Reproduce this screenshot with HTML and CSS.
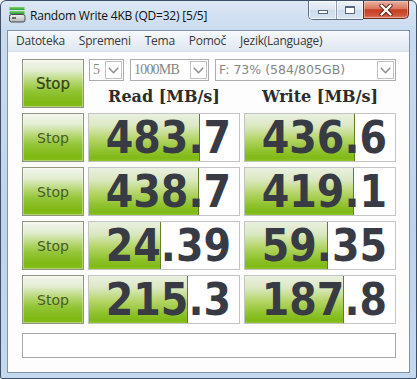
FILE: index.html
```html
<!DOCTYPE html>
<html>
<head>
<meta charset="utf-8">
<title>Random Write 4KB</title>
<link rel="stylesheet" href="styles.css">
</head>
<body>
<div class="window">
  <div class="titlebar">
    <svg class="app-icon" width="17" height="17" viewBox="0 0 17 17">
      <defs>
        <linearGradient id="g1" x1="0" y1="0" x2="0" y2="1"><stop offset="0" stop-color="#7fd36a"/><stop offset="1" stop-color="#2a9a3a"/></linearGradient>
        <linearGradient id="g2" x1="0" y1="0" x2="0" y2="1"><stop offset="0" stop-color="#f2f2f2"/><stop offset="1" stop-color="#b4b4b4"/></linearGradient>
      </defs>
      <rect x="0.5" y="1" width="15" height="3" fill="url(#g1)"/>
      <rect x="0.5" y="5" width="15" height="3" fill="url(#g1)"/>
      <rect x="0.5" y="8.5" width="15.5" height="7.5" rx="2" fill="url(#g2)" stroke="#4a4a4a"/>
      <rect x="3" y="11" width="4" height="2" fill="#6a6a6a"/>
    </svg>
    <span class="title">Random Write 4KB (QD=32) [5/5]</span>
    <div class="caption">
      <div class="cap-group">
        <div class="cap-btn"><span class="min-glyph"></span></div>
        <div class="cap-btn cap-max"><span class="max-glyph"></span></div>
      </div>
      <div class="cap-close">
        <svg width="14" height="12" viewBox="0 0 14 12">
          <path d="M2.5 1.5 L11.5 10.5 M11.5 1.5 L2.5 10.5" stroke="#5a2418" stroke-width="4.2" stroke-linecap="round"/>
          <path d="M2.5 1.5 L11.5 10.5 M11.5 1.5 L2.5 10.5" stroke="#ffffff" stroke-width="2.4" stroke-linecap="round"/>
        </svg>
      </div>
    </div>
  </div>
  <div class="frame-body">
    <div class="client">
      <div class="menubar">
        <span class="menu-item">Datoteka</span>
        <span class="menu-item">Spremeni</span>
        <span class="menu-item">Tema</span>
        <span class="menu-item">Pomoč</span>
        <span class="menu-item">Jezik(Language)</span>
      </div>
      <div class="content">
        <div class="grid">
          <div class="stop stop-main">Stop</div>
          <div class="combos">
            <div class="combo combo-count"><span class="combo-val serif">5</span><span class="combo-arrow"><svg width="11" height="7" viewBox="0 0 11 7"><path d="M0.8 0.8 L5.5 5.8 L10.2 0.8" fill="none" stroke="#8a8a8a" stroke-width="1.4"/></svg></span></div>
            <div class="combo combo-size"><span class="combo-val serif">1000MB</span><span class="combo-arrow"><svg width="11" height="7" viewBox="0 0 11 7"><path d="M0.8 0.8 L5.5 5.8 L10.2 0.8" fill="none" stroke="#8a8a8a" stroke-width="1.4"/></svg></span></div>
            <div class="combo combo-drive"><span class="combo-val sans">F: 73% (584/805GB)</span><span class="combo-arrow"><svg width="11" height="7" viewBox="0 0 11 7"><path d="M0.8 0.8 L5.5 5.8 L10.2 0.8" fill="none" stroke="#8a8a8a" stroke-width="1.4"/></svg></span></div>
          </div>
          <div class="hdr hdr-read">Read [MB/s]</div>
          <div class="hdr hdr-write">Write [MB/s]</div>

          <div class="stop">Stop</div>
          <div class="cell" style="--w:111px">483.7</div>
          <div class="cell" style="--w:110px">436.6</div>

          <div class="stop">Stop</div>
          <div class="cell" style="--w:110px">438.7</div>
          <div class="cell" style="--w:109px">419.1</div>

          <div class="stop">Stop</div>
          <div class="cell" style="--w:72px">24.39</div>
          <div class="cell" style="--w:83px">59.35</div>

          <div class="stop">Stop</div>
          <div class="cell" style="--w:99px">215.3</div>
          <div class="cell" style="--w:99px">187.8</div>

          <div class="status"></div>
        </div>
      </div>
    </div>
  </div>
</div>
</body>
</html>
```

FILE: styles.css
```css
* { box-sizing: border-box; margin: 0; padding: 0; }
html, body { width: 417px; height: 379px; overflow: hidden; background: #ffffff; }

.window {
  width: 417px;
  height: 379px;
  border: 1px solid #3e5068;
  border-radius: 6px 6px 2px 2px;
  background: linear-gradient(#dbe7f5, #c9dbef 30px, #bfd4ec 60%, #c4d8ee);
  display: flex;
  flex-direction: column;
  overflow: hidden;
}

.titlebar {
  height: 29px;
  display: flex;
  align-items: flex-start;
  flex: none;
}
.app-icon { margin: 5px 0 0 8px; flex: none; }
.title {
  margin: 7px 0 0 4px;
  font: 12px/16px "Open Sans", "DejaVu Sans", sans-serif;
  letter-spacing: -0.2px;
  color: #111;
}

.caption { margin-left: auto; margin-right: 7px; display: flex; height: 19px; }
.cap-group {
  display: flex;
  border: 1px solid #5f718a;
  border-top: 0;
  border-right: 0;
  border-radius: 0 0 0 5px;
  overflow: hidden;
}
.cap-btn {
  width: 27px;
  height: 18px;
  background: linear-gradient(#eef3f9, #dbe5f1 50%, #cddbec 51%, #d9e5f2);
  display: flex;
  align-items: center;
  justify-content: center;
  box-shadow: inset 0 0 0 1px rgba(255,255,255,0.6);
}
.cap-max { border-left: 1px solid #8d9db3; }
.min-glyph {
  width: 10px; height: 4px; margin-top: 4px;
  border: 1px solid #56667d; background: #ffffff;
}
.max-glyph {
  width: 10px; height: 8px;
  border: 1px solid #56667d; border-top-width: 2px; background: #ffffff;
}
.cap-close {
  width: 46px;
  height: 18px;
  border: 1px solid #6b2c22;
  border-top: 0;
  border-radius: 0 0 5px 0;
  background: linear-gradient(#eab0a2, #d9785f 45%, #c63b20 52%, #d1563a 85%, #e0806a);
  display: flex;
  align-items: center;
  justify-content: center;
  box-shadow: inset 0 0 0 1px rgba(255,220,210,0.45);
}

.frame-body {
  flex: 1;
  display: flex;
  padding: 0 6px 5px 6px;
}
.client {
  flex: 1;
  border: 1px solid #7f93ad;
  background: #fdfdfd;
  display: flex;
  flex-direction: column;
}

.menubar {
  height: 21px;
  flex: none;
  display: flex;
  padding-left: 1px;
  background: linear-gradient(#f6f9fc, #e8eef5 60%, #dfe7f1);
  border-bottom: 1px solid #d6dee9;
}
.menu-item {
  padding: 0 7px;
  font: 12px/20px "Open Sans", "DejaVu Sans", sans-serif;
  letter-spacing: -0.25px;
  color: #3a3a3a;
}

.content { padding: 7px 0 0 14px; }

.grid {
  display: grid;
  grid-template-columns: 62px 152px 152px;
  grid-template-rows: 22px 22px 49px 49px 49px 49px 29px;
  column-gap: 4px;
  row-gap: 5px;
}

.stop {
  border: 1px solid #8f957f;
  background: linear-gradient(#f3f6ee 0%, #e3edd2 22%, #b7d875 45%, #93c537 65%, #7fb812 90%, #86bd1f 100%);
  box-shadow: inset 0 0 0 1px rgba(255,255,255,0.35);
  display: flex;
  align-items: center;
  justify-content: center;
  font: 14px "DejaVu Sans", sans-serif;
  color: #4b5a2c;
}
.stop-main {
  grid-column: 1;
  grid-row: 1 / 3;
  font-size: 15px;
  color: #34420f;
  -webkit-text-stroke: 0.2px #34420f;
}

.combos {
  grid-column: 2 / 4;
  grid-row: 1;
  display: flex;
  padding-left: 1px;
}
.combo {
  display: flex;
  height: 22px;
  border: 1px solid #acacac;
  background: #ffffff;
}
.combo-count { width: 35px; }
.combo-size { width: 79px; margin-left: 6px; }
.combo-drive { width: 181px; margin-left: 6px; }
.combo-val {
  flex: 1;
  padding-left: 3px;
  color: #858585;
  white-space: nowrap;
  overflow: hidden;
}
.serif { font: 14px/20px "Liberation Serif", serif; letter-spacing: -0.8px; }
.sans { font: 12.5px/20px "DejaVu Sans", sans-serif; }
.combo-arrow {
  width: 17px;
  margin: 1px;
  border: 1px solid #c2c2c2;
  display: flex;
  align-items: center;
  justify-content: center;
  flex: none;
}

.hdr {
  grid-row: 2;
  text-align: center;
  font: bold 16px/22px "DejaVu Serif", serif;
  color: #2c2c2c;
}
.hdr-read { grid-column: 2; }
.hdr-write { grid-column: 3; }

.cell {
  border: 1px solid #c4c4c4;
  background-color: #ffffff;
  background-image:
    linear-gradient(#5c8220, #5c8220),
    linear-gradient(#eaf0e1 0%, #dbe8c2 25%, #b2d463 55%, #8ec22b 80%, #80b915 94%, #8ec32c 100%);
  background-repeat: no-repeat;
  background-size: 1px 100%, var(--w) 100%;
  background-position: calc(var(--w) - 1px) 0, 0 0;
  text-align: right;
  padding-right: 8px;
  font-family: "DejaVu Sans Condensed", "DejaVu Sans", sans-serif;
  font-stretch: condensed;
  font-weight: bold;
  font-size: 44px;
  line-height: 47px;
  color: #383b44;
  white-space: nowrap;
}

.status {
  grid-column: 1 / -1;
  margin-top: 4px;
  border: 1px solid #a8a8a8;
  background: #ffffff;
}
```
